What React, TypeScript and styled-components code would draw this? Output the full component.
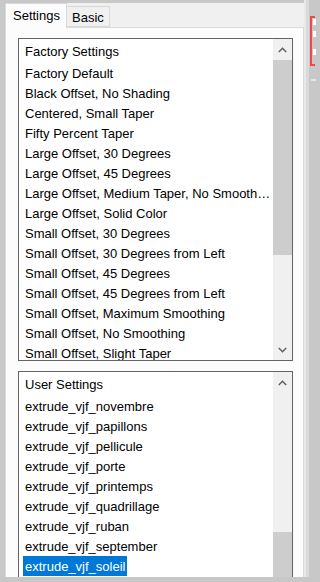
import React from "react";
import styled, { createGlobalStyle } from "styled-components";

const GlobalStyle = createGlobalStyle`
  html, body {
    margin: 0;
    padding: 0;
    background: #c8c8c8;
  }
`;

// data
const factoryItems = [
  "Factory Default",
  "Black Offset, No Shading",
  "Centered, Small Taper",
  "Fifty Percent Taper",
  "Large Offset, 30 Degrees",
  "Large Offset, 45 Degrees",
  "Large Offset, Medium Taper, No Smoothing",
  "Large Offset, Solid Color",
  "Small Offset, 30 Degrees",
  "Small Offset, 30 Degrees from Left",
  "Small Offset, 45 Degrees",
  "Small Offset, 45 Degrees from Left",
  "Small Offset, Maximum Smoothing",
  "Small Offset, No Smoothing",
  "Small Offset, Slight Taper",
];

const userItems = [
  "extrude_vjf_novembre",
  "extrude_vjf_papillons",
  "extrude_vjf_pellicule",
  "extrude_vjf_porte",
  "extrude_vjf_printemps",
  "extrude_vjf_quadrillage",
  "extrude_vjf_ruban",
  "extrude_vjf_september",
  "extrude_vjf_soleil",
];

// Styles
const Screen = styled.div`
  width: 320px;
  height: 582px;
  overflow: hidden;
  display: flex;
  padding: 3px 0 5px 5px;
  box-sizing: border-box;
  background: #c8c8c8;
  font-family: "Liberation Sans", Arial, sans-serif;
`;

const Dialog = styled.div`
  width: 299px;
  display: flex;
  flex-direction: column;
  background: #f0f0f0;
`;

const TabRow = styled.div`
  display: flex;
  align-items: flex-end;
  height: 24px;
  position: relative;
  z-index: 1;
`;

const Tab = styled.div<{ $active?: boolean }>`
  box-sizing: border-box;
  height: ${(p) => (p.$active ? "25px" : "21px")};
  padding: ${(p) => (p.$active ? "4px 7px 0 7px" : "3px 5px 0 5px")};
  width: ${(p) => (p.$active ? "62px" : "44px")};
  font-size: 13px;
  color: #000;
  background: ${(p) => (p.$active ? "#fcfcfc" : "#f0f0f0")};
  border: 1px solid #d9d9d9;
  border-bottom: ${(p) => (p.$active ? "none" : "1px solid #d9d9d9")};
  margin-left: ${(p) => (p.$active ? "0" : "-1px")};
  margin-bottom: ${(p) => (p.$active ? "-1px" : "0")};
`;

const TabBody = styled.div`
  flex: 1;
  overflow: hidden;
  display: flex;
  flex-direction: column;
  gap: 10px;
  padding: 10px 10px 0 12px;
  background: #fcfcfc;
  border: 1px solid #d9d9d9;
  border-bottom: none;
  width: 299px;
  box-sizing: border-box;
`;

const ListBox = styled.div<{ $height: number }>`
  flex: none;
  height: ${(p) => p.$height}px;
  box-sizing: border-box;
  border: 1px solid #646464;
  background: #fff;
  display: flex;
  overflow: hidden;
`;

const Items = styled.div`
  flex: 1;
  min-width: 0;
  display: flex;
  flex-direction: column;
`;

const Header = styled.div`
  flex: none;
  height: 24px;
  box-sizing: border-box;
  padding: 2px 0 0 6px;
  line-height: 22px;
  font-size: 13px;
  color: #000;
`;

const Row = styled.div`
  flex: none;
  height: 20px;
  padding-left: 4px;
  display: flex;
  align-items: center;
  min-width: 0;
`;

const Label = styled.span<{ $selected?: boolean }>`
  display: block;
  height: 20px;
  box-sizing: border-box;
  line-height: 19px;
  padding: 1px 2px 0 2px;
  font-size: 13px;
  white-space: nowrap;
  overflow: hidden;
  text-overflow: ellipsis;
  color: ${(p) => (p.$selected ? "#fff" : "#000")};
  background: ${(p) => (p.$selected ? "#0078d7" : "transparent")};
`;

const Scrollbar = styled.div`
  flex: none;
  width: 19px;
  background: #f0f0f0;
  display: flex;
  flex-direction: column;
`;

const ArrowButton = styled.div`
  flex: none;
  height: 21px;
  display: flex;
  align-items: center;
  justify-content: center;
`;

const Track = styled.div`
  flex: 1;
  display: flex;
  flex-direction: column;
`;

const Thumb = styled.div<{ $top: number; $size: number }>`
  margin-top: ${(p) => p.$top}px;
  height: ${(p) => p.$size}px;
  background: #cdcdcd;
  flex: none;
`;

const SideStrip = styled.div`
  flex: 1;
  display: flex;
  border-left: 2px solid #e8e8e8;
  margin-top: -3px;
`;

const SideInner = styled.div`
  flex: 1;
  border-left: 3px solid #dadada;
  padding: 16px 0 0 1px;
  display: flex;
  flex-direction: column;
  align-items: flex-start;
  gap: 13px;
`;

const Dash = styled.div`
  width: 5px;
  height: 2px;
  margin-left: 1px;
  background: #e4e4e4;
`;

const Chevron: React.FC<{ up?: boolean }> = ({ up }) => (
  <svg width="9" height="6" viewBox="0 0 9 6">
    <path
      d={up ? "M0.8 5 L4.5 1.3 L8.2 5" : "M0.8 1 L4.5 4.7 L8.2 1"}
      fill="none"
      stroke="#606060"
      strokeWidth="1.5"
    />
  </svg>
);

const Marker: React.FC = () => (
  <svg width="7" height="50" viewBox="0 0 7 50" style={{ flex: "none" }}>
    <rect x="0" y="0" width="2" height="50" fill="#f04848" />
    <rect x="0" y="0" width="5" height="2" fill="#f04848" />
    <rect x="0" y="48" width="5" height="2" fill="#f04848" />
    <rect x="3" y="3" width="3" height="6" fill="#ffffff" />
    <rect x="3" y="15" width="3" height="6" fill="#ffffff" />
    <rect x="3" y="33" width="3" height="6" fill="#ffffff" />
  </svg>
);

const App: React.FC = () => {
  return (
    <>
      <GlobalStyle />
      <Screen>
        <Dialog>
          <TabRow>
            <Tab $active>Settings</Tab>
            <Tab>Basic</Tab>
          </TabRow>
          <TabBody>
            <ListBox $height={323}>
              <Items>
                <Header>Factory Settings</Header>
                {factoryItems.map((name) => (
                  <Row key={name}>
                    <Label>{name}</Label>
                  </Row>
                ))}
              </Items>
              <Scrollbar>
                <ArrowButton>
                  <Chevron up />
                </ArrowButton>
                <Track>
                  <Thumb $top={0} $size={195} />
                </Track>
                <ArrowButton>
                  <Chevron />
                </ArrowButton>
              </Scrollbar>
            </ListBox>
            <ListBox $height={240}>
              <Items>
                <Header>User Settings</Header>
                {userItems.map((name, i) => (
                  <Row key={name}>
                    <Label $selected={i === userItems.length - 1}>{name}</Label>
                  </Row>
                ))}
              </Items>
              <Scrollbar>
                <ArrowButton>
                  <Chevron up />
                </ArrowButton>
                <Track>
                  <Thumb $top={139} $size={80} />
                </Track>
              </Scrollbar>
            </ListBox>
          </TabBody>
        </Dialog>
        <SideStrip>
          <SideInner>
            <Marker />
            <Dash />
          </SideInner>
        </SideStrip>
      </Screen>
    </>
  );
};

export default App;
